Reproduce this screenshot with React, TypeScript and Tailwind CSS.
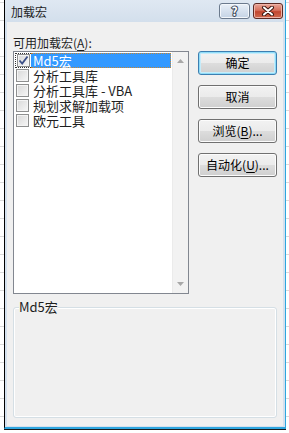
const addins = [
  { label: "Md5宏", checked: true },
  { label: "分析工具库", checked: false },
  { label: "分析工具库 - VBA", checked: false },
  { label: "规划求解加载项", checked: false },
  { label: "欧元工具", checked: false },
];

function CheckBox({ checked }: { checked: boolean }) {
  return (
    <div className="flex h-[13px] w-[13px] items-center justify-center border border-[#8e8f8f] bg-gradient-to-br from-[#d8d8d8] to-[#f7f7f7] shadow-[inset_0_0_0_1px_#f4f4f4]">
      {checked && (
        <svg width="11" height="11" viewBox="0 0 11 11">
          <path d="M1.5 5.5 L4.2 8.6 L9.5 1.5" fill="none" stroke="#3c4f86" strokeWidth="1.8" />
        </svg>
      )}
    </div>
  );
}

function DialogButton({ children, isDefault = false }: { children: React.ReactNode; isDefault?: boolean }) {
  return (
    <button
      type="button"
      className={`flex h-[24px] w-full items-center justify-center rounded-[3px] border bg-[linear-gradient(to_bottom,#f2f2f2_0%,#ebebeb_50%,#dddddd_50%,#cfcfcf_100%)] text-[12px] leading-none text-black ${
        isDefault
          ? "border-[#3c7fb1] shadow-[inset_0_0_0_1px_#8fdcf8,inset_0_0_0_2px_#c6ecfa]"
          : "border-[#707070] shadow-[inset_0_0_0_1px_#fcfcfc]"
      }`}
    >
      {children}
    </button>
  );
}

export default function App() {
  return (
    <div className="h-[433px] w-[289px] overflow-hidden bg-white bg-[repeating-linear-gradient(to_bottom,transparent_0px,transparent_2px,#dadada_2px,#dadada_3px,transparent_3px,transparent_18px)] font-['Noto_Sans_CJK_SC',sans-serif] text-[#1e1e1e]">
      <div className="ml-[4px] flex h-[429px] w-[282px] flex-col border-b-2 border-l border-r border-b-[#2ea6df] border-l-black border-r-[#2ea6df] bg-[#d4e1ee] shadow-[0_1px_0_#1a1a1a]">
        {/* Title bar */}
        <div className="flex h-[22px] shrink-0 items-start justify-between bg-gradient-to-b from-[#dfe8f2] to-[#d3dfec] pl-[6px] pr-[2px]">
          <span className="mt-[4px] text-[12px] leading-[16px]">加载宏</span>
          <div className="mt-[3px] flex gap-[3px]">
            <div className="flex h-[16px] w-[31px] items-center justify-center rounded-[3px] border border-[#6b7a8d] bg-gradient-to-b from-[#e9f0f8] to-[#c4d3e5] shadow-[inset_0_0_0_1px_#f3f7fb]">
              <span className="text-[12px] font-bold leading-none text-white [-webkit-text-stroke:2px_#3d4a5c] [paint-order:stroke_fill]">?</span>
            </div>
            <div className="flex h-[16px] w-[30px] items-center justify-center rounded-[3px] border border-[#5c2a24] bg-[linear-gradient(to_bottom,#e9a698_0%,#d6705c_45%,#c1462f_55%,#cf6a4f_100%)] shadow-[inset_0_0_0_1px_#eeb4a8]">
              <svg width="14" height="10" viewBox="0 0 14 10">
                <path d="M3 1.5 L11 8.5 M11 1.5 L3 8.5" stroke="#3b1812" strokeWidth="4" strokeLinecap="round" />
                <path d="M3 1.5 L11 8.5 M11 1.5 L3 8.5" stroke="#ffffff" strokeWidth="2" strokeLinecap="round" />
              </svg>
            </div>
          </div>
        </div>

        {/* Frame + client area */}
        <div className="flex flex-1 flex-col px-[2px] pb-[1px]">
          <div className="flex flex-1 flex-col bg-[#f0f0f0] px-[6px] pt-[12px]">
            <div className="h-[17px] text-[12px] leading-[17px]">
              可用加载宏(<span className="underline underline-offset-2">A</span>):
            </div>

            <div className="flex gap-[9px]">
              {/* List box */}
              <div className="flex h-[243px] w-[176px] border border-[#828790] bg-white">
                <div className="flex-1 pl-[1px] pt-[1px]">
                  {addins.map((item, i) => {
                    const selected = i === 0;
                    return (
                      <div key={item.label} className="flex h-[15px] items-stretch">
                        <div
                          className={`flex w-[16px] items-center pl-[1px] ${
                            selected ? "border-y border-l border-dotted border-[#333]" : ""
                          }`}
                        >
                          <CheckBox checked={item.checked} />
                        </div>
                        <div
                          className={`flex items-center pl-[2px] text-[13px] leading-[13px] ${
                            selected
                              ? "w-[140px] border-y border-r border-dotted border-[#c9852f] bg-[#3399ff] text-white"
                              : ""
                          }`}
                        >
                          {item.label}
                        </div>
                      </div>
                    );
                  })}
                </div>
                {/* Scrollbar */}
                <div className="flex w-[16px] flex-col items-center justify-between border-l border-[#ebebeb] bg-[#f2f2f2] py-[7px]">
                  <svg width="7" height="4" viewBox="0 0 7 4">
                    <path d="M0 4 L3.5 0 L7 4 Z" fill="#a8a8a8" />
                  </svg>
                  <svg width="7" height="4" viewBox="0 0 7 4">
                    <path d="M0 0 L3.5 4 L7 0 Z" fill="#a8a8a8" />
                  </svg>
                </div>
              </div>

              {/* Buttons */}
              <div className="flex w-[79px] flex-col gap-[10px]">
                <DialogButton isDefault>确定</DialogButton>
                <DialogButton>取消</DialogButton>
                <DialogButton>
                  浏览(<span className="underline underline-offset-2">B</span>)...
                </DialogButton>
                <DialogButton>
                  自动化(<span className="underline underline-offset-2">U</span>)...
                </DialogButton>
              </div>
            </div>

            {/* Group box */}
            <fieldset className="mt-[6px] h-[118px] rounded-[3px] border border-[#d5dfe5] px-[5px] shadow-[inset_0_0_0_1px_#ffffff]">
              <legend className="bg-[#f0f0f0] text-[13px] leading-[14px]">Md5宏</legend>
            </fieldset>
          </div>
        </div>
      </div>
    </div>
  );
}
